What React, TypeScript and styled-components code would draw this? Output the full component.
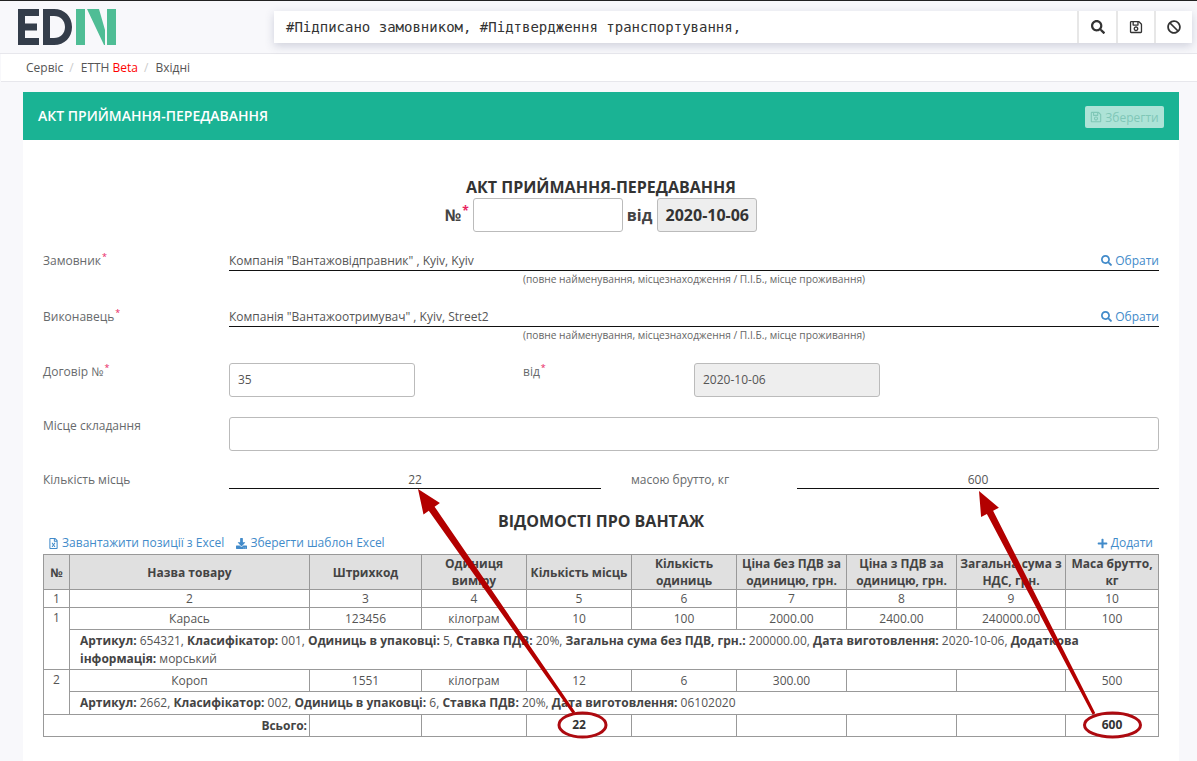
import styled, { createGlobalStyle } from 'styled-components'
import {
  FaBan,
  FaDownload,
  FaPlus,
  FaRegFileExcel,
  FaRegSave,
  FaSearch,
} from 'react-icons/fa'

const GlobalStyle = createGlobalStyle`
  html, body {
    margin: 0;
    padding: 0;
    height: 100%;
    overflow: hidden;
    background: #f8f8fb;
  }
  * {
    box-sizing: border-box;
  }
  body {
    font-family: 'Open Sans', 'Liberation Sans', sans-serif;
    font-size: 12px;
    color: #676a6c;
  }
`

type Point = [number, number]

// tapered arrow: thin at the tail, thick at the head
const arrowPoints = (tail: Point, tip: Point) => {
  const [x1, y1] = tail
  const [x2, y2] = tip
  const len = Math.hypot(x2 - x1, y2 - y1)
  const ux = (x2 - x1) / len
  const uy = (y2 - y1) / len
  const nx = -uy
  const ny = ux
  const bx = x2 - ux * 24
  const by = y2 - uy * 24
  const p = (x: number, y: number, d: number) =>
    `${(x + nx * d).toFixed(1)},${(y + ny * d).toFixed(1)}`
  return [
    p(x1, y1, 1.5),
    p(bx, by, 3.5),
    p(bx, by, 10),
    `${x2},${y2}`,
    p(bx, by, -10),
    p(bx, by, -3.5),
    p(x1, y1, -1.5),
  ].join(' ')
}

const details = [
  [
    ['Артикул:', ' 654321, '],
    ['Класифікатор:', ' 001, '],
    ['Одиниць в упаковці:', ' 5, '],
    ['Ставка ПДВ:', ' 20%, '],
    ['Загальна сума без ПДВ, грн.:', ' 200000.00, '],
    ['Дата виготовлення:', ' 2020-10-06, '],
    ['Додаткова інформація:', ' морський'],
  ],
  [
    ['Артикул:', ' 2662, '],
    ['Класифікатор:', ' 002, '],
    ['Одиниць в упаковці:', ' 6, '],
    ['Ставка ПДВ:', ' 20%, '],
    ['Дата виготовлення:', ' 06102020'],
  ],
]

const columns = [
  '№',
  'Назва товару',
  'Штрихкод',
  'Одиниця виміру',
  'Кількість місць',
  'Кількість одиниць',
  'Ціна без ПДВ за одиницю, грн.',
  'Ціна з ПДВ за одиницю, грн.',
  'Загальна сума з НДС, грн.',
  'Маса брутто, кг',
]

const columnWidths = [26, 240, 112, 105, 105, 105, 110, 110, 109, 93]

const rows = [
  ['Карась', '123456', 'кілограм', '10', '100', '2000.00', '2400.00', '240000.00', '100'],
  ['Короп', '1551', 'кілограм', '12', '6', '300.00', '', '', '500'],
]

const Logo = () => (
  <svg width="98" height="36" viewBox="18 9 98 36">
    <path
      fill="#343d4a"
      fillRule="evenodd"
      d="M18 9h21v7H25v7.500h12v7H25V38h14v7H18zM43 9h11c10.500 0 18 7.500 18 18s-7.500 18-18 18H43zM50 16v22h4c6.500 0 11-4.500 11-11s-4.500-11-11-11z"
    />
    <path
      fill="#4fbd95"
      d="M76 9h9v36h-9zM87 9h12l6 21v15h-1zM107 9h9v36h-9z"
    />
  </svg>
)

const PartyRow = ({ label, value }: { label: string; value: string }) => (
  <Party>
    <Label>
      {label}
      <Required>*</Required>
    </Label>
    <div>
      <PartyValue>
        <span>{value}</span>
        <PickLink>
          <FaSearch size={11} /> Обрати
        </PickLink>
      </PartyValue>
      <Hint>(повне найменування, місцезнаходження / П.І.Б., місце проживання)</Hint>
    </div>
  </Party>
)

const RowGroup = ({
  n,
  row,
  info,
  tall,
}: {
  n: number
  row: string[]
  info: string[][]
  tall: boolean
}) => (
  <>
    <DataRow>
      <IndexCell rowSpan={2}>{n}</IndexCell>
      {row.map((v, i) => (
        <Cell key={i}>{v}</Cell>
      ))}
    </DataRow>
    <DetailRow $tall={tall}>
      <DetailCell colSpan={9}>
        {info.map(([k, v]) => (
          <span key={k}>
            <b>{k}</b>
            {v}
          </span>
        ))}
      </DetailCell>
    </DetailRow>
  </>
)

export default function App() {
  return (
    <Page>
      <GlobalStyle />
      <Header>
        <Logo />
        <SearchBar>
          <SearchInput>#Підписано замовником, #Підтвердження транспортування,</SearchInput>
          <SearchButton $width={37}>
            <FaSearch size={14} />
          </SearchButton>
          <SearchButton $width={36}>
            <FaRegSave size={14} />
          </SearchButton>
          <SearchButton $width={36}>
            <FaBan size={14} />
          </SearchButton>
        </SearchBar>
      </Header>
      <Breadcrumb>
        <span>Сервіс</span>
        <Slash>/</Slash>
        <span>
          ЕТТН <Beta>Beta</Beta>
        </span>
        <Slash>/</Slash>
        <span>Вхідні</span>
      </Breadcrumb>
      <Card>
        <CardHeader>
          <CardTitle>АКТ ПРИЙМАННЯ-ПЕРЕДАВАННЯ</CardTitle>
          <SaveButton>
            <FaRegSave size={12} /> Зберегти
          </SaveButton>
        </CardHeader>
        <CardBody>
          <DocTitle>АКТ ПРИЙМАННЯ-ПЕРЕДАВАННЯ</DocTitle>
          <NumberRow>
            <span>
              №<Required>*</Required>
            </span>
            <NumberInput />
            <span>від</span>
            <DateBox>2020-10-06</DateBox>
          </NumberRow>
          <PartyRow label="Замовник" value={'Компанія "Вантажовідправник" , Kyiv, Kyiv'} />
          <PartyRow label="Виконавець" value={'Компанія "Вантажоотримувач" , Kyiv, Street2'} />
          <ContractRow>
            <Label>
              Договір №<Required>*</Required>
            </Label>
            <TextField>35</TextField>
            <Label>
              від<Required>*</Required>
            </Label>
            <TextField $disabled>2020-10-06</TextField>
          </ContractRow>
          <PlaceRow>
            <Label>Місце складання</Label>
            <TextField />
          </PlaceRow>
          <AmountRow>
            <Label>Кількість місць</Label>
            <AmountValue>22</AmountValue>
            <Label>масою брутто, кг</Label>
            <AmountValue>600</AmountValue>
          </AmountRow>
          <SectionTitle>ВІДОМОСТІ ПРО ВАНТАЖ</SectionTitle>
          <TableTools>
            <ToolGroup>
              <ToolLink>
                <FaRegFileExcel size={11} /> Завантажити позиції з Excel
              </ToolLink>
              <ToolLink>
                <FaDownload size={11} /> Зберегти шаблон Excel
              </ToolLink>
            </ToolGroup>
            <ToolLink>
              <FaPlus size={11} /> Додати
            </ToolLink>
          </TableTools>
          <Table>
            <colgroup>
              {columnWidths.map((w, i) => (
                <col key={i} style={{ width: w }} />
              ))}
            </colgroup>
            <thead>
              <tr>
                {columns.map((c) => (
                  <HeadCell key={c}>{c}</HeadCell>
                ))}
              </tr>
            </thead>
            <tbody>
              <IndexRow>
                {columns.map((_, i) => (
                  <Cell key={i}>{i + 1}</Cell>
                ))}
              </IndexRow>
              {rows.map((row, r) => (
                <RowGroup key={r} n={r + 1} row={row} info={details[r]} tall={r === 0} />
              ))}
              <TotalRow>
                <TotalCell colSpan={2}>Всього:</TotalCell>
                <Cell />
                <Cell />
                <Cell>
                  <b>22</b>
                </Cell>
                <Cell />
                <Cell />
                <Cell />
                <Cell />
                <Cell>
                  <b>600</b>
                </Cell>
              </TotalRow>
            </tbody>
          </Table>
        </CardBody>
      </Card>
      <Annotations viewBox="0 0 1197 761">
        <polygon points={arrowPoints([574, 713], [418, 489])} />
        <polygon points={arrowPoints([1094, 714], [979, 491])} />
        <ellipse cx="582.500" cy="725" rx="23.500" ry="12" />
        <ellipse cx="1112.500" cy="725" rx="28" ry="12" />
      </Annotations>
    </Page>
  )
}

const Page = styled.div`
  position: relative;
  width: 1197px;
  height: 761px;
  overflow: hidden;
  border-top: 1px solid #222;
`

const Header = styled.header`
  height: 53px;
  padding: 8px 5px 0 18px;
  display: flex;
  justify-content: space-between;
  align-items: flex-start;
  border-bottom: 1px solid #e7e7ec;
  svg {
    display: block;
  }
`

const SearchBar = styled.div`
  width: 918px;
  height: 32px;
  margin-top: 2px;
  display: flex;
  gap: 2px;
  background: #e7e7e7;
  box-shadow: 0 3px 10px rgba(60, 70, 110, 0.22);
`

const SearchInput = styled.div`
  flex: 1;
  padding-left: 12px;
  background: #fff;
  font-family: 'DejaVu Sans Mono', 'Liberation Mono', monospace;
  font-size: 14px;
  line-height: 32px;
  color: #333;
  white-space: nowrap;
`

const SearchButton = styled.div<{ $width: number }>`
  width: ${(p) => p.$width}px;
  display: flex;
  align-items: center;
  justify-content: center;
  background: #fff;
  color: #333;
`

const Breadcrumb = styled.nav`
  height: 28px;
  margin-left: 1px;
  padding-left: 25px;
  display: flex;
  align-items: center;
  background: #fff;
  border-bottom: 1px solid #e7e7ec;
  color: #555;
`

const Slash = styled.span`
  margin: 0 7px 0 6px;
  color: #ccc;
`

const Beta = styled.span`
  color: #f00;
`

const Card = styled.main`
  margin: 10px 18px 0 23px;
  height: 700px;
  background: #fff;
`

const CardHeader = styled.div`
  height: 48px;
  padding: 14px 15px 0;
  display: flex;
  justify-content: space-between;
  align-items: flex-start;
  background: #1ab394;
`

const CardTitle = styled.h2`
  margin: 0;
  font-size: 14px;
  line-height: 20px;
  font-weight: 600;
  color: #fff;
`

const SaveButton = styled.div`
  height: 22px;
  width: 79px;
  display: flex;
  align-items: center;
  justify-content: center;
  gap: 3px;
  border-radius: 2px;
  background: #ade3d7;
  color: #80c7b7;
  white-space: nowrap;
`

const CardBody = styled.div`
  padding: 37px 20px 0;
`

const DocTitle = styled.h3`
  margin: 0 0 1px;
  font-size: 16px;
  line-height: 20px;
  font-weight: 700;
  text-align: center;
  color: #333;
`

const NumberRow = styled.div`
  height: 34px;
  margin-bottom: 20px;
  display: flex;
  justify-content: center;
  align-items: center;
  gap: 4px;
  font-size: 16px;
  font-weight: 700;
  color: #444;
`

const NumberInput = styled.div`
  width: 150px;
  height: 34px;
  background: #fff;
  border: 1px solid #bbb;
  border-radius: 3px;
`

const DateBox = styled.div`
  width: 100px;
  height: 34px;
  margin-left: 1px;
  display: flex;
  align-items: center;
  justify-content: center;
  background: #eee;
  border: 1px solid #bbb;
  border-radius: 3px;
  color: #333;
`

const Required = styled.sup`
  color: #e8245f;
  font-size: 75%;
  line-height: 0;
  margin-left: 1px;
`

const Label = styled.label`
  line-height: 18px;
  color: #676a6c;
`

const Party = styled.div`
  display: grid;
  grid-template-columns: 186px 1fr;
  height: 37px;
  & + & {
    margin-top: 19px;
  }
`

const PartyValue = styled.div`
  height: 19px;
  display: flex;
  justify-content: space-between;
  line-height: 18px;
  border-bottom: 1px solid #111;
  color: #555;
`

const PickLink = styled.a`
  color: #428bca;
  svg {
    vertical-align: -1px;
  }
`

const Hint = styled.div`
  font-size: 10.200px;
  line-height: 16px;
  text-align: center;
  color: #666;
`

const ContractRow = styled.div`
  margin-top: 18px;
  display: grid;
  grid-template-columns: 186px 186px 279px 186px;
  ${Label}:nth-child(3) {
    padding-left: 108px;
  }
`

const TextField = styled.div<{ $disabled?: boolean }>`
  height: 34px;
  padding-left: 8px;
  line-height: 32px;
  border: 1px solid #bbb;
  border-radius: 3px;
  background: ${(p) => (p.$disabled ? '#eee' : '#fff')};
  color: #555;
`

const PlaceRow = styled.div`
  margin-top: 20px;
  display: grid;
  grid-template-columns: 186px 1fr;
`

const AmountRow = styled.div`
  margin-top: 19px;
  display: grid;
  grid-template-columns: 186px 372px 196px 1fr;
  ${Label} {
    padding-top: 1px;
  }
  ${Label}:nth-child(3) {
    padding-left: 30px;
  }
`

const AmountValue = styled.div`
  height: 19px;
  padding-top: 1px;
  line-height: 17px;
  text-align: center;
  border-bottom: 1px solid #111;
  color: #555;
`

const SectionTitle = styled.h3`
  margin: 22px 0 0;
  font-size: 16px;
  line-height: 20px;
  font-weight: 700;
  text-align: center;
  color: #333;
`

const TableTools = styled.div`
  height: 18px;
  margin: 2px 0 3px;
  padding: 0 6px 0 5px;
  display: flex;
  justify-content: space-between;
  align-items: center;
`

const ToolGroup = styled.div`
  display: flex;
  gap: 12px;
`

const ToolLink = styled.a`
  color: #428bca;
  svg {
    vertical-align: -2px;
  }
`

const Table = styled.table`
  width: 1115px;
  table-layout: fixed;
  border-collapse: collapse;
  color: #555;
  font-size: 12px;
`

const HeadCell = styled.th`
  height: 33px;
  padding: 0 3px;
  background: #e0e0e0;
  border: 1px solid #999;
  font-weight: 700;
  line-height: 17px;
  color: #444;
  text-align: center;
`

const IndexRow = styled.tr`
  height: 18px;
`

const DataRow = styled.tr`
  height: 22px;
`

const TotalRow = styled.tr`
  height: 22px;
`

const DetailRow = styled.tr<{ $tall: boolean }>`
  height: ${(p) => (p.$tall ? 40 : 22)}px;
`

const Cell = styled.td`
  padding: 0 3px;
  border: 1px solid #999;
  line-height: 16px;
  text-align: center;
  b {
    color: #333;
  }
`

const IndexCell = styled(Cell)`
  padding-top: 2px;
  vertical-align: top;
`

const DetailCell = styled.td`
  padding: 2px 10px;
  border: 1px solid #999;
  line-height: 17.500px;
  b {
    color: #444;
  }
`

const TotalCell = styled.td`
  padding: 0 2px 0 0;
  border: 1px solid #999;
  text-align: right;
  font-weight: 700;
  color: #444;
`

const Annotations = styled.svg`
  position: absolute;
  top: -1px;
  left: 0;
  width: 1197px;
  height: 761px;
  pointer-events: none;
  polygon {
    fill: #b30000;
  }
  ellipse {
    fill: none;
    stroke: #ad0a10;
    stroke-width: 3;
  }
`
